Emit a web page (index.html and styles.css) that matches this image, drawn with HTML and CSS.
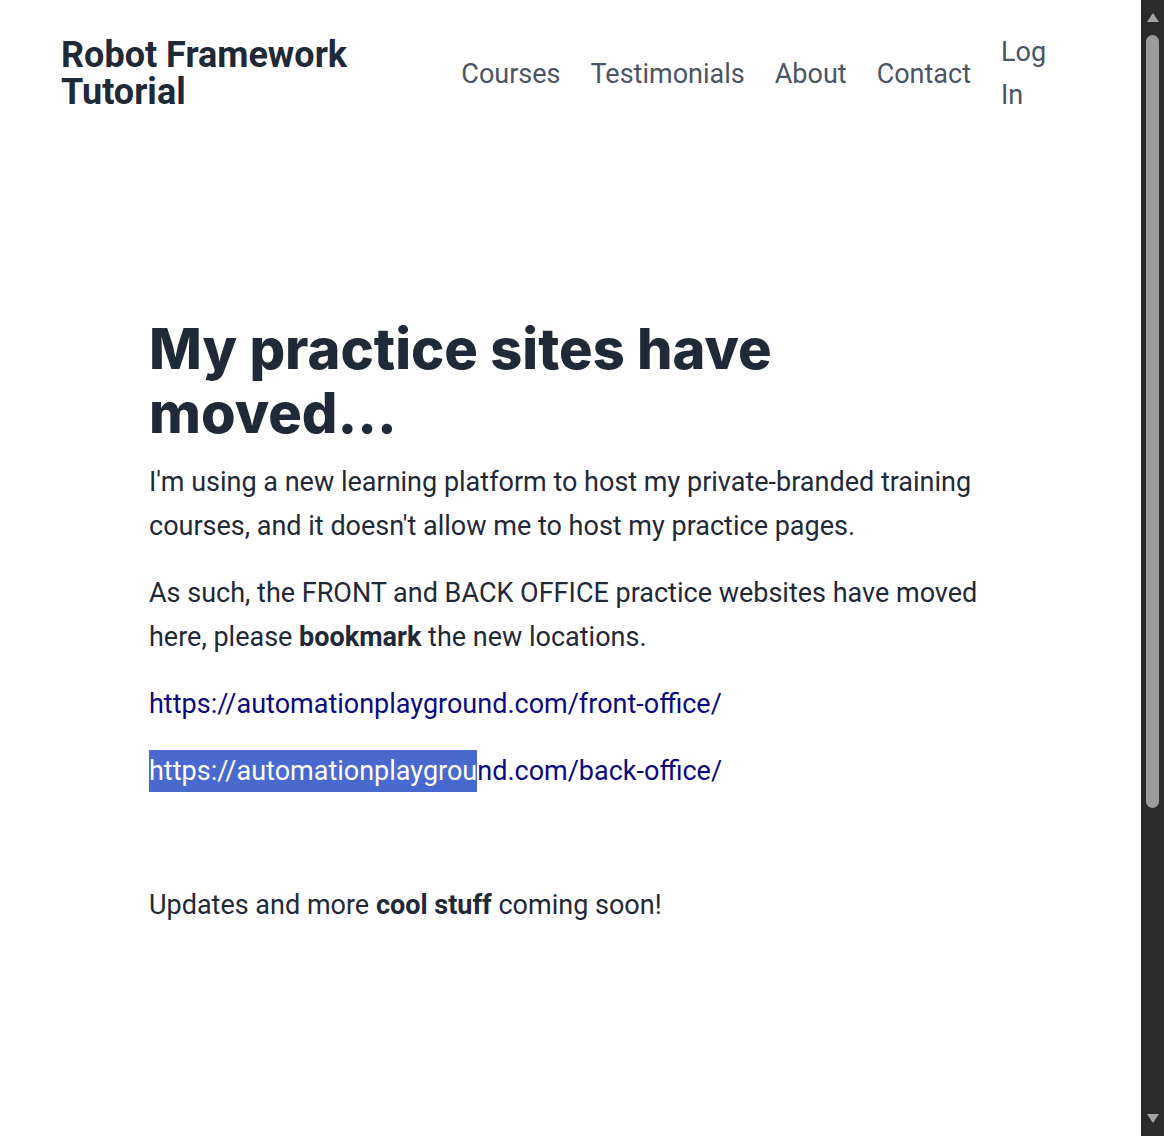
FILE: index.html
```html
<!DOCTYPE html>
<html lang="en">
<head>
<meta charset="utf-8">
<title>Robot Framework Tutorial</title>
<link rel="stylesheet" href="styles.css">
</head>
<body>
<div class="page">
  <header class="site-header">
    <a class="brand" href="#">Robot Framework Tutorial</a>
    <nav class="nav">
      <a href="#">Courses</a>
      <a href="#">Testimonials</a>
      <a href="#">About</a>
      <a href="#">Contact</a>
      <a href="#" class="login">Log In</a>
    </nav>
  </header>
  <main class="content">
    <h1 class="headline">My practice sites have moved...</h1>
    <p>I'm using a new learning platform to host my private-branded training courses, and it doesn't allow me to host my practice pages.</p>
    <p>As such, the FRONT and BACK OFFICE practice websites have moved here, please <strong>bookmark</strong> the new locations.</p>
    <p><a class="link" href="#">https://automationplayground.com/front-office/</a></p>
    <p><a class="link" href="#"><span class="selected">https://automationplaygrou</span>nd.com/back-office/</a></p>
    <p class="spacer">&nbsp;</p>
    <p>Updates and more <strong>cool stuff</strong> coming soon!</p>
  </main>
</div>
<div class="scrollbar" aria-hidden="true">
  <span class="arrow up"></span>
  <span class="thumb"></span>
  <span class="arrow down"></span>
</div>
</body>
</html>
```

FILE: styles.css
```css
html, body {
  margin: 0;
  padding: 0;
  background: #ffffff;
}
body {
  font-family: Roboto, "Liberation Sans", sans-serif;
  color: #1f2937;
  overflow: hidden;
}
.page {
  width: 1141px;
}
.site-header {
  display: flex;
  align-items: center;
  justify-content: space-between;
  padding: 31px 94px 20px 61px;
}
.brand {
  width: 330px;
  font-size: 36px;
  font-weight: 700;
  line-height: 37px;
  color: #1f2937;
  text-decoration: none;
}
.nav {
  display: flex;
  align-items: center;
  gap: 30px;
}
.nav a {
  font-size: 27px;
  line-height: 43px;
  color: #4b5563;
  text-decoration: none;
}
.nav .login {
  width: 46px;
}
.content {
  padding: 180px 150px 0 149px;
}
.headline {
  font-family: Inter, "Open Sans", sans-serif;
  font-weight: 800;
  font-size: 56px;
  line-height: 64px;
  color: #1f2937;
  margin: 0 0 15px;
  width: 680px;
}
.content p {
  font-size: 27px;
  line-height: 44px;
  margin: 0 0 23px;
  color: #1f2937;
}
.content strong {
  font-weight: 700;
}
.link {
  color: #0a0a80;
  text-decoration: none;
}
.selected {
  background: #4a69cf;
  color: #ffffff;
  padding: 5px 0;
}
.scrollbar {
  position: fixed;
  top: 0;
  right: 0;
  width: 23px;
  height: 100%;
  background: #2b2b2b;
  display: flex;
  flex-direction: column;
  align-items: center;
}
.arrow {
  width: 0;
  height: 0;
  border-left: 6px solid transparent;
  border-right: 6px solid transparent;
}
.arrow.up {
  margin-top: 13px;
  border-bottom: 9px solid #a3a3a3;
}
.arrow.down {
  margin-top: auto;
  margin-bottom: 13px;
  border-top: 9px solid #a3a3a3;
}
.thumb {
  margin-top: 13px;
  width: 13px;
  height: 773px;
  border-radius: 7px;
  background: #9b9b9b;
}
```
